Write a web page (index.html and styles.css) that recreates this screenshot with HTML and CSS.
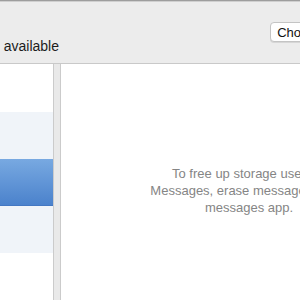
FILE: index.html
```html
<!DOCTYPE html>
<html lang="en">
<head>
    <meta charset="UTF-8">
    <title>Storage Management</title>
    <link rel="stylesheet" href="styles.css">
</head>
<body>
    <div class="window">
        <div class="toolbar">
            <div class="summary">31.23 GB available</div>
            <button class="btn">Choose…</button>
        </div>
        <div class="content">
            <div class="sidebar">
                <div class="row"></div>
                <div class="row alt"></div>
                <div class="row selected"></div>
                <div class="row alt"></div>
                <div class="row"></div>
            </div>
            <div class="divider"></div>
            <div class="detail">
                <p class="hint">To free up storage used by<br>Messages, erase messages in the<br>messages app.</p>
            </div>
        </div>
    </div>
</body>
</html>
```

FILE: styles.css
```css
body {
    margin: 0;
    width: 300px;
    height: 300px;
    overflow: hidden;
    background-color: #ececec;
    font-family: 'Liberation Sans', Arial, sans-serif;
}

.window {
    margin-left: -120px;
    width: 560px;
    border-top: 1px solid #9d9d9d;
    box-shadow: inset 0 1px 0 #cfcfcf;
}

.toolbar {
    height: 62px;
    display: flex;
    align-items: flex-start;
    justify-content: space-between;
    box-sizing: border-box;
}

.summary {
    width: 168px;
    margin-top: 37px;
    margin-left: 11px;
    text-align: right;
    white-space: nowrap;
    font-size: 14px;
    color: #1c1c1c;
}

.btn {
    margin-top: 21px;
    margin-right: 90px;
    height: 20px;
    padding: 0 14px 0 6px;
    background: #fff;
    border: 1px solid #c4c4c4;
    border-radius: 4px;
    font-family: inherit;
    font-size: 13px;
    color: #111;
    box-shadow: 0 1px 0 #d6d6d6;
}

.content {
    display: flex;
    border-top: 1px solid #c9c9c9;
    height: 240px;
}

.sidebar {
    width: 173px;
    background: #fff;
    border-right: 1px solid #cbcbcb;
}

.row {
    height: 47px;
}

.row:first-child {
    height: 48px;
}

.row.alt {
    background: #f0f4f9;
}

.row.selected {
    background: linear-gradient(#78a9e1, #4b82cc);
    border-bottom: 1px solid #4377c2;
    box-sizing: border-box;
}

.divider {
    width: 6px;
    background: #e9e9e9;
    border-right: 1px solid #cbcbcb;
}

.detail {
    width: 376px;
    background: #fff;
}

.hint {
    margin: 101px 0 0;
    text-align: center;
    font-size: 13px;
    line-height: 17px;
    color: #858585;
}
```
